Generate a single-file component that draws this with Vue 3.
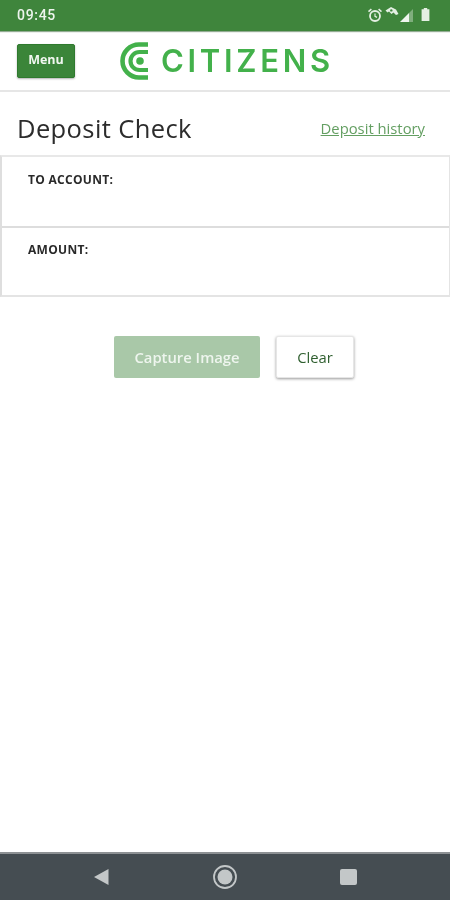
<script setup>
const fields = ['TO ACCOUNT:', 'AMOUNT:']
</script>

<template>
  <div class="screen">
    <div class="status">
      <span class="time">09:45</span>
      <div class="status-icons">
        <svg width="16" height="16" viewBox="0 0 16 16" class="alarm">
          <circle cx="8" cy="9" r="5" fill="none" stroke="#e4efe3" stroke-width="1.8" />
          <path d="M8 6.5V9.3L10 10.4" fill="none" stroke="#e4efe3" stroke-width="1.2" />
          <path d="M1.5 4.6L4.4 2.2M14.5 4.6L11.6 2.2" stroke="#e4efe3" stroke-width="1.6" />
        </svg>
        <svg width="14" height="12" viewBox="0 0 14 12" class="wifi">
          <path d="M0.5 4.5L6 1L11 3.5L13.5 8L11 9L8.5 6.5L6.5 8L4 5.5L2.5 6.5Z" fill="#e4efe3" />
          <circle cx="6.3" cy="4.4" r="1.2" fill="#3f853c" />
        </svg>
        <svg width="13" height="13" viewBox="0 0 13 13" class="signal">
          <path d="M0 13L9 4V13Z" fill="#f0f5ef" />
          <path d="M9 4L13 0V13H9Z" fill="#7fae7d" />
        </svg>
        <svg width="9" height="13" viewBox="0 0 9 13" class="battery">
          <path d="M2.8 0H6.2V1.2H8.4V13H0.6V1.2H2.8Z" fill="#e4efe3" />
        </svg>
      </div>
    </div>

    <header class="topbar">
      <button class="menu">Menu</button>
      <div class="logo">
        <svg width="30" height="38" viewBox="0 0 30 38">
          <path d="M29 2.5H20A16.5 16.5 0 0 0 20 35.500H29" fill="none" stroke="#43b14b" stroke-width="4.6" />
          <path d="M29 10H20.500A9 9 0 0 0 20.500 28H29" fill="none" stroke="#43b14b" stroke-width="4.200" />
          <circle cx="21" cy="19" r="3.800" fill="#43b14b" />
        </svg>
        <span class="wordmark">CITIZENS</span>
      </div>
    </header>

    <main class="content">
      <div class="title-row">
        <h1>Deposit Check</h1>
        <a class="history">Deposit history</a>
      </div>
      <div class="fields">
        <div v-for="f in fields" :key="f" class="field">{{ f }}</div>
      </div>
      <div class="actions">
        <button class="capture">Capture Image</button>
        <button class="clear">Clear</button>
      </div>
    </main>

    <nav class="navbar">
      <svg width="16" height="18" viewBox="0 0 16 18"><path d="M15.500 1V17L1 9Z" fill="#c3c7c8" /></svg>
      <svg width="26" height="26" viewBox="0 0 26 26">
        <circle cx="13" cy="13" r="11" fill="none" stroke="#c3c7c8" stroke-width="1.800" />
        <circle cx="13" cy="13" r="7.500" fill="#c3c7c8" />
      </svg>
      <div class="square"></div>
    </nav>
  </div>
</template>

<style>
html, body { margin: 0; background: #fff; }
</style>

<style scoped>
.screen {
  width: 450px;
  height: 900px;
  display: flex;
  flex-direction: column;
  overflow: hidden;
  font-family: "Open Sans", "Liberation Sans", sans-serif;
  background: #fff;
  filter: blur(0.5px);
}
.status {
  height: 31px;
  flex: none;
  background: #3f853c;
  display: flex;
  align-items: center;
  justify-content: space-between;
  padding: 0 20px 2px 17px;
  box-sizing: border-box;
  color: #eef5ee;
  box-shadow: 0 1px 1px rgba(40, 90, 40, .5);
}
.time {
  font-family: Roboto, sans-serif;
  font-size: 14px;
  font-weight: 500;
  letter-spacing: .7px;
}
.status-icons { display: flex; align-items: center; }
.alarm { margin-right: 2px; }
.wifi { margin-right: 1px; margin-top: -6px; }
.signal { margin-right: 8px; margin-top: 1px; }
.topbar {
  height: 61px;
  flex: none;
  display: flex;
  align-items: center;
  padding-left: 17px;
  box-sizing: border-box;
  border-bottom: 2px solid #e6e6e6;
}
.menu {
  width: 58px;
  height: 34px;
  padding: 0 0 3px;
  background: #3b8539;
  color: #f1f7f0;
  border: 1px solid #2f7a2e;
  border-radius: 2px;
  box-shadow: 0 1px 2px rgba(0, 0, 0, .3);
  font: 700 12.500px "Open Sans", sans-serif;
}
.logo {
  display: flex;
  align-items: center;
  margin-left: 44px;
}
.wordmark {
  margin-left: 12px;
  font-family: Inter, sans-serif;
  font-size: 31px;
  font-weight: 600;
  letter-spacing: 3.700px;
  color: #43b14b;
  line-height: 38px;
}
.content { flex: 1; }
.title-row {
  height: 63px;
  display: flex;
  align-items: center;
  justify-content: space-between;
  padding: 0 25px 0 17px;
}
h1 {
  margin: 0 0 -8px;
  font-size: 25.500px;
  font-weight: 400;
  color: #2c2c2c;
  letter-spacing: .4px;
}
.history {
  margin-bottom: -8px;
  font-size: 14.800px;
  color: #649f62;
  text-decoration: underline;
}
.fields {
  border-top: 2px solid #e8e8e8;
  border-bottom: 2px solid #e4e4e4;
  border-left: 2px solid #dedede;
  border-right: 1px solid #e4e4e4;
}
.field {
  height: 69px;
  box-sizing: border-box;
  padding: 15px 0 0 26px;
  font-size: 12px;
  letter-spacing: .3px;
  font-weight: 700;
  line-height: 16px;
  color: #2a2a2a;
}
.field + .field {
  border-top: 2px solid #dddddd;
  padding-top: 14px;
}
.actions {
  display: flex;
  justify-content: center;
  gap: 16px;
  margin-top: 39px;
  padding-left: 18px;
}
.capture {
  width: 146px;
  height: 42px;
  background: #a9c8a8;
  color: #eef5ee;
  border: none;
  border-radius: 2px;
  font: 600 14.800px "Open Sans", sans-serif;
}
.clear {
  width: 78px;
  height: 42px;
  background: #fff;
  color: #2f5f2f;
  border: 1px solid #e6e6e6;
  border-radius: 2px;
  box-shadow: 0 1px 3px rgba(0, 0, 0, .4);
  font: 500 14.800px "Open Sans", sans-serif;
}
.navbar {
  height: 48px;
  flex: none;
  box-sizing: border-box;
  border-top: 2px solid #8d9194;
  background: #454d52;
  display: flex;
  align-items: center;
  justify-content: space-between;
  padding: 0 93px;
}
.square {
  width: 17px;
  height: 16px;
  background: #c3c7c8;
  border-radius: 2px;
}
</style>
